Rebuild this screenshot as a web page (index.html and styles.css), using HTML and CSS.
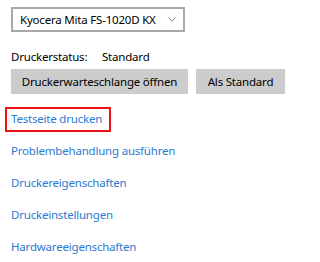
FILE: index.html
```html
<!DOCTYPE html>
<html lang="de">
<head>
<meta charset="utf-8">
<link rel="stylesheet" href="styles.css">
</head>
<body>
<div class="panel">
  <div class="select">
    <span class="select-text">Kyocera Mita FS-1020D KX</span>
    <svg class="chev" width="8" height="5" viewBox="0 0 8 5"><path d="M0.5 0.5 L4 4.2 L7.5 0.5" fill="none" stroke="#8a8a8a" stroke-width="1"/></svg>
  </div>
  <div class="status">
    <span class="status-label">Druckerstatus:</span>
    <span class="status-value">Standard</span>
  </div>
  <div class="buttons">
    <button class="btn btn-queue">Druckerwarteschlange öffnen</button>
    <button class="btn btn-default">Als Standard</button>
  </div>
  <ul class="links">
    <li><a class="link link-marked">Testseite drucken</a></li>
    <li><a class="link">Problembehandlung ausführen</a></li>
    <li><a class="link">Druckereigenschaften</a></li>
    <li><a class="link">Druckeinstellungen</a></li>
    <li><a class="link">Hardwareeigenschaften</a></li>
  </ul>
</div>
</body>
</html>
```
FILE: styles.css
```css
html, body {
  margin: 0;
  padding: 0;
  background: #ffffff;
}
body {
  font-family: "Noto Sans", "Open Sans", sans-serif;
  font-size: 11.5px;
  line-height: 16px;
  letter-spacing: -0.2px;
  color: #000000;
}
.panel {
  padding: 7px 0 0 11px;
  display: flex;
  flex-direction: column;
}
.select {
  box-sizing: border-box;
  width: 174px;
  height: 25px;
  border: 2px solid #a8a8a8;
  display: flex;
  align-items: center;
  justify-content: space-between;
  padding: 0 7px 0 7px;
}
.select-text {
  white-space: nowrap;
}
.chev {
  display: block;
}
.status {
  margin-top: 17px;
  display: flex;
  height: 16px;
  align-items: center;
}
.status-label {
  width: 91px;
}
.buttons {
  margin-top: 4px;
  display: flex;
  gap: 8px;
}
.btn {
  font: inherit;
  letter-spacing: inherit;
  background: #cccccc;
  border: 0;
  height: 25px;
  padding: 0;
  color: #000000;
  white-space: nowrap;
}
.btn-queue {
  width: 177px;
}
.btn-default {
  width: 89px;
}
.links {
  list-style: none;
  margin: 13px 0 0 0;
  padding: 0;
  display: flex;
  flex-direction: column;
  gap: 8px;
}
.links li {
  height: 24px;
  display: flex;
  align-items: center;
}
.link {
  display: block;
  color: #2a7ad2;
  white-space: nowrap;
}
.link-marked {
  border: 2px solid #ee1111;
  padding: 2px 7px 3px 4px;
  margin-left: -6px;
}
```
